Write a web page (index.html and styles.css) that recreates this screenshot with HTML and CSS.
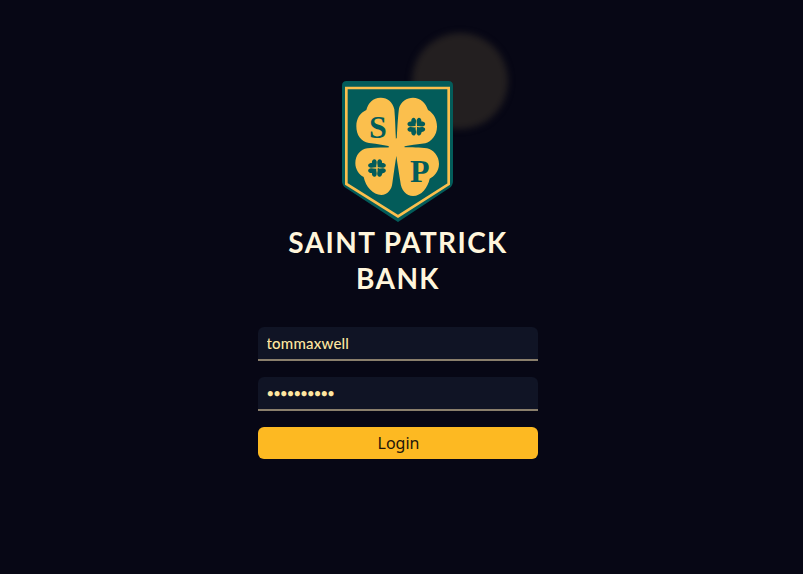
FILE: index.html
```html
<!DOCTYPE html>
<html lang="en">
<head>
<meta charset="utf-8">
<title>Saint Patrick Bank</title>
<link rel="stylesheet" href="styles.css">
</head>
<body>
<div class="glow"></div>
<main class="login">
  <svg class="crest" viewBox="37 33 333 423" aria-label="Saint Patrick Bank crest">
    <defs>
      <g id="mini">
        <path d="M1 2 L11 13 L14 11 L3 0Z"/>
        <path id="lf" d="M0 -2 C-2 -6 -11 -8 -11 -15 C-11 -20 -4 -21 0 -16 C4 -21 11 -20 11 -15 C11 -8 2 -6 0 -2Z" transform="rotate(45)"/>
        <use href="#lf" transform="rotate(90)"/>
        <use href="#lf" transform="rotate(180)"/>
        <use href="#lf" transform="rotate(270)"/>
      </g>
    </defs>
    <path class="shield-base" d="M37 47 Q37 33 51 33 H356 Q370 33 370 47 V334 Q370 348 358 355 L205 456 L50 355 Q37 348 37 334Z"/>
    <path class="shield-line" d="M50 54 H357 V342 L205 439 L50 342Z"/>
    <g class="leaves">
      <path d="M199 212 C197 180 197 150 194 118 C189 95 172 82 152 83 C130 84 116 98 110 120 C92 128 80 145 80 168 C80 195 93 214 118 219 C145 222 165 226 190 231 C196 226 198 220 199 212Z"/>
      <path d="M201 212 C203 170 205 140 208 115 C213 95 232 83 250 83 C272 84 288 98 295 120 C312 130 322 148 322 170 C322 195 305 215 287 220 C265 223 240 226 214 231 C206 226 202 220 201 212Z"/>
      <path d="M190 232 C165 233 140 232 113 235 C93 238 77 255 77 280 C77 298 88 314 102 321 C108 350 130 375 155 375 C173 375 186 360 188 340 C191 320 195 290 200 258 C198 248 195 240 190 232Z"/>
      <path d="M214 232 C250 232 270 232 292 235 C312 240 328 258 328 282 C328 305 312 321 300 326 C295 352 275 378 250 378 C230 378 214 360 212 335 C208 310 204 285 200 258 C202 248 207 240 214 232Z"/>
      <path d="M200 204 L226 231 L200 260 L176 231Z"/>
    </g>
    <g class="marks">
      <use href="#mini" transform="translate(260 170) scale(1.35)"/>
      <use href="#mini" transform="translate(142 294) scale(1.35)"/>
      <text class="initial" x="145" y="205" text-anchor="middle">S</text>
      <text class="initial" x="270" y="335" text-anchor="middle">P</text>
    </g>
  </svg>
  <h1 class="brand">SAINT PATRICK<br>BANK</h1>
  <form class="form">
    <input class="field" type="text" value="tommaxwell" aria-label="Username">
    <input class="field secret" type="password" value="password12" aria-label="Password">
    <button class="submit" type="button">Login</button>
  </form>
</main>
</body>
</html>
```
FILE: styles.css
```css
* { box-sizing: border-box; }
html, body { height: 100%; }
body {
  margin: 0;
  background: #070715;
  font-family: "Lato", sans-serif;
  overflow: hidden;
  position: relative;
}
.glow {
  position: absolute;
  left: 412px;
  top: 33px;
  width: 96px;
  height: 96px;
  border-radius: 50%;
  background: #231f20;
  filter: blur(3px);
}
.login {
  position: relative;
  display: flex;
  flex-direction: column;
  align-items: center;
  padding: 81px 8px 0 0;
}
.crest { width: 111px; height: 141px; display: block; }
.shield-base { fill: #035c5a; }
.shield-line { fill: none; stroke: #fbbf4d; stroke-width: 8; }
.leaves { fill: #fbbf4d; }
.marks { fill: #035c5a; }
.initial { font-family: "Liberation Serif", serif; font-weight: 700; font-size: 96px; }
.brand {
  margin: 2px 0 0;
  font-size: 28px;
  line-height: 36px;
  font-weight: 700;
  color: #fff6dc;
  text-align: center;
  letter-spacing: 1.4px;
  padding-left: 1px;
}
.form {
  width: 280px;
  margin-top: 31px;
  display: flex;
  flex-direction: column;
}
.field {
  height: 34px;
  margin-bottom: 16px;
  padding: 0 9px;
  background: #101425;
  border: 0;
  border-bottom: 2px solid #8a7f6c;
  border-radius: 6px 6px 0 0;
  color: #ffe6a0;
  font-family: "Lato", sans-serif;
  font-weight: 500;
  font-size: 15px;
  letter-spacing: 0.2px;
  outline: none;
}
.secret { font-size: 13px; letter-spacing: -0.8px; }
.submit {
  height: 32px;
  padding-left: 8px;
  border: 0;
  border-radius: 6px;
  background: #fdb922;
  color: #21150a;
  font-family: "Noto Sans", sans-serif;
  font-size: 16px;
}
```
